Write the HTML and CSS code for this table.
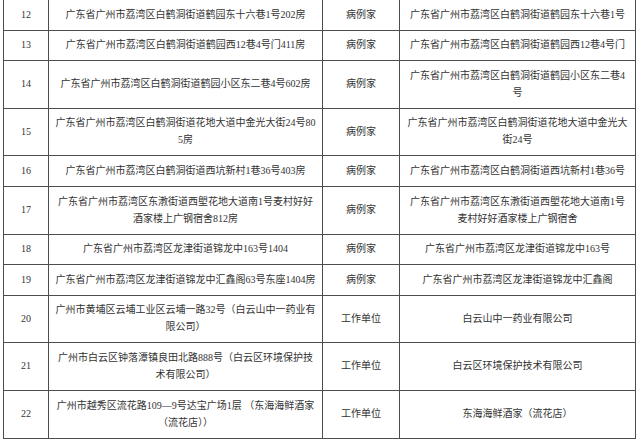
FILE: index.html
```html
<!DOCTYPE html>
<html lang="zh-CN">
<head>
<meta charset="utf-8">
<title>病例活动场所</title>
<link rel="stylesheet" href="styles.css">
</head>
<body>
<table class="list">
  <colgroup>
    <col class="c-num">
    <col class="c-addr">
    <col class="c-type">
    <col class="c-place">
  </colgroup>
  <tbody>
    <tr><td class="num">12</td><td class="addr">广东省广州市荔湾区白鹤洞街道鹤园东十六巷1号202房</td><td class="type">病例家</td><td class="place">广东省广州市荔湾区白鹤洞街道鹤园东十六巷1号</td></tr>
    <tr><td class="num">13</td><td class="addr">广东省广州市荔湾区白鹤洞街道鹤园西12巷4号门411房</td><td class="type">病例家</td><td class="place">广东省广州市荔湾区白鹤洞街道鹤园西12巷4号门</td></tr>
    <tr><td class="num">14</td><td class="addr">广东省广州市荔湾区白鹤洞街道鹤园小区东二巷4号602房</td><td class="type">病例家</td><td class="place">广东省广州市荔湾区白鹤洞街道鹤园小区东二巷4号</td></tr>
    <tr><td class="num">15</td><td class="addr">广东省广州市荔湾区白鹤洞街道花地大道中金光大街24号805房</td><td class="type">病例家</td><td class="place">广东省广州市荔湾区白鹤洞街道花地大道中金光大街24号</td></tr>
    <tr><td class="num">16</td><td class="addr">广东省广州市荔湾区白鹤洞街道西坑新村1巷36号403房</td><td class="type">病例家</td><td class="place">广东省广州市荔湾区白鹤洞街道西坑新村1巷36号</td></tr>
    <tr><td class="num">17</td><td class="addr">广东省广州市荔湾区东漖街道西塱花地大道南1号麦村好好酒家楼上广钢宿舍812房</td><td class="type">病例家</td><td class="place">广东省广州市荔湾区东漖街道西塱花地大道南1号麦村好好酒家楼上广钢宿舍</td></tr>
    <tr><td class="num">18</td><td class="addr">广东省广州市荔湾区龙津街道锦龙中163号1404</td><td class="type">病例家</td><td class="place">广东省广州市荔湾区龙津街道锦龙中163号</td></tr>
    <tr><td class="num">19</td><td class="addr">广东省广州市荔湾区龙津街道锦龙中汇鑫阁63号东座1404房</td><td class="type">病例家</td><td class="place">广东省广州市荔湾区龙津街道锦龙中汇鑫阁</td></tr>
    <tr><td class="num">20</td><td class="addr">广州市黄埔区云埔工业区云埔一路32号（白云山中一药业有限公司）</td><td class="type">工作单位</td><td class="place">白云山中一药业有限公司</td></tr>
    <tr><td class="num">21</td><td class="addr">广州市白云区钟落潭镇良田北路888号（白云区环境保护技术有限公司）</td><td class="type">工作单位</td><td class="place">白云区环境保护技术有限公司</td></tr>
    <tr><td class="num">22</td><td class="addr">广州市越秀区流花路109—9号达宝广场1层 （东海海鲜酒家（流花店））</td><td class="type">工作单位</td><td class="place">东海海鲜酒家（流花店）</td></tr>
  </tbody>
</table>
</body>
</html>
```

FILE: styles.css
```css
html, body {
  margin: 0;
  padding: 0;
  background: #ffffff;
}

body {
  font-family: "Liberation Serif", "Noto Sans CJK SC", serif;
  font-size: 10px;
  color: #333333;
}

.list {
  border-collapse: collapse;
  table-layout: fixed;
  width: 632px;
  margin: -1px 0 0 3px;
}

.c-num { width: 45px; }
.c-addr { width: 274px; }
.c-type { width: 77px; }
.c-place { width: 236px; }

.list td {
  border: 1px solid #4d4d4d;
  text-align: center;
  vertical-align: middle;
  line-height: 17px;
  padding: 5.6px 4px 7px;
  word-break: break-all;
}

.list td.addr {
  padding-left: 5px;
  padding-right: 5px;
}

.list td.place {
  padding-left: 6px;
  padding-right: 6px;
}
```
